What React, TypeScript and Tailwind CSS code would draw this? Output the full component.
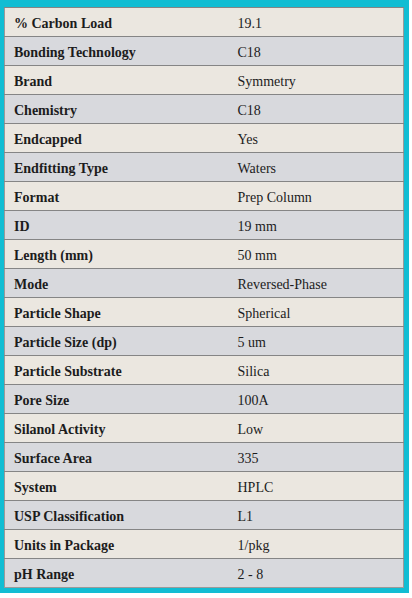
const specs = [
  ["% Carbon Load", "19.1"],
  ["Bonding Technology", "C18"],
  ["Brand", "Symmetry"],
  ["Chemistry", "C18"],
  ["Endcapped", "Yes"],
  ["Endfitting Type", "Waters"],
  ["Format", "Prep Column"],
  ["ID", "19 mm"],
  ["Length (mm)", "50 mm"],
  ["Mode", "Reversed-Phase"],
  ["Particle Shape", "Spherical"],
  ["Particle Size (dp)", "5 um"],
  ["Particle Substrate", "Silica"],
  ["Pore Size", "100A"],
  ["Silanol Activity", "Low"],
  ["Surface Area", "335"],
  ["System", "HPLC"],
  ["USP Classification", "L1"],
  ["Units in Package", "1/pkg"],
  ["pH Range", "2 - 8"],
];

export default function App() {
  return (
    <div className="min-h-screen bg-white">
      <div className="w-[409px] border-t-[7px] border-r-[5px] border-b-[5px] border-l-4 border-[#11bdd3]">
        <table className="w-full border-collapse border border-[#9a9a9a] font-['Liberation_Serif',serif] text-[14px] text-[#1c1c1c]">
          <tbody>
            {specs.map(([label, value], i) => (
              <tr
                key={label}
                className={`h-[29px] border-t border-[#858585] ${
                  i % 2 === 0 ? "bg-[#ebe7e0]" : "bg-[#d8d9dd]"
                }`}
              >
                <td className="w-[224px] px-[9px] pt-[2px] pb-0 font-bold">{label}</td>
                <td className="px-[9px] pt-[2px] pb-0">{value}</td>
              </tr>
            ))}
          </tbody>
        </table>
      </div>
    </div>
  );
}
